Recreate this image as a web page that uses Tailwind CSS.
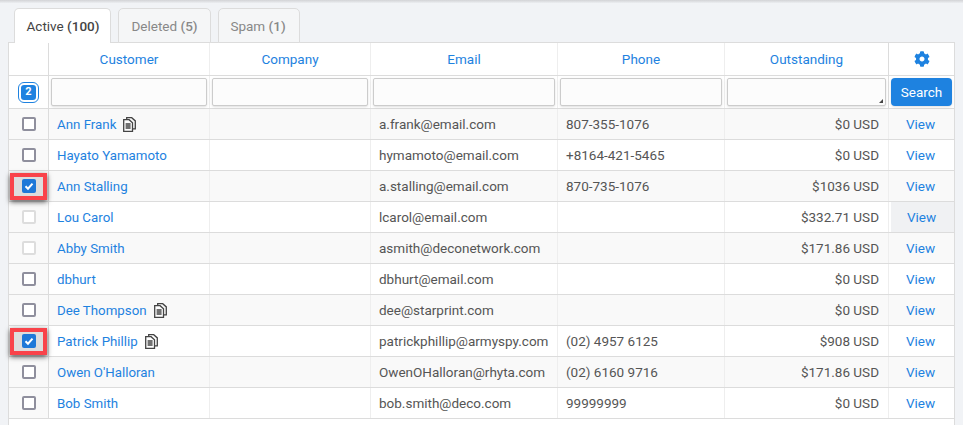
<!DOCTYPE html>
<html lang="en">
<head>
  <meta charset="UTF-8" />
  <title>Customers</title>
  <script src="https://cdn.jsdelivr.net/npm/@tailwindcss/browser@4"></script>
</head>
<body class="h-[425px] w-[963px] overflow-hidden bg-[#f1f3f6] font-['Roboto',sans-serif] text-[13.5px] text-[#555]">
  <div class="h-[3px] bg-gradient-to-b from-[#d2d3d6] to-[#eceef1]"></div>

  <!-- Tabs -->
  <div class="relative z-10 mt-[5px] flex h-[35px] gap-[7px] pl-[14px] -mb-px">
    <div class="flex w-[97px] items-center justify-center rounded-t-[5px] border border-b-0 border-[#dcdcdc] bg-white pt-px pl-px text-[#444]">Active&nbsp;<b class="font-medium">(100)</b></div>
    <div class="flex w-[93px] items-center justify-center rounded-t-[5px] border border-[#dcdcdc] bg-[#f5f6f7] pt-px text-[#888]">Deleted&nbsp;<b class="font-medium">(5)</b></div>
    <div class="flex w-[82px] items-center justify-center rounded-t-[5px] border border-[#dcdcdc] bg-[#f5f6f7] pt-px pr-[2px] text-[#888]">Spam&nbsp;<b class="font-medium">(1)</b></div>
  </div>

  <!-- Table -->
  <div class="ml-2 h-[400px] w-[947px] border-x border-t border-[#dcdcdc] bg-white">
    <div class="grid h-[33px] grid-cols-[40px_161px_161px_187px_167px_164px_65px] items-center border-b border-[#dcdcdc] text-center text-[#1e82e0]">
      <div class="h-full border-r border-[#dcdcdc]"></div>
      <div class="flex h-full items-center justify-center border-r border-[#eee]">Customer</div>
      <div class="flex h-full items-center justify-center border-r border-[#eee]">Company</div>
      <div class="flex h-full items-center justify-center border-r border-[#eee]">Email</div>
      <div class="flex h-full items-center justify-center border-r border-[#eee]">Phone</div>
      <div class="flex h-full items-center justify-center border-r border-[#dcdcdc]">Outstanding</div>
      <div class="flex h-full items-center justify-center">
        <svg viewBox="0 0 512 512" class="h-[16px] w-[16px] fill-[#1e82e0]"><path d="M487.4 315.7l-42.6-24.6c4.3-23.2 4.3-47 0-70.2l42.6-24.6c4.9-2.8 7.1-8.6 5.5-14-11.1-35.6-30-67.8-54.7-94.6-3.8-4.1-10-5.1-14.8-2.3L380.8 110c-17.9-15.4-38.5-27.3-60.8-35.1V25.8c0-5.6-3.9-10.5-9.4-11.7-36.7-8.2-74.3-7.8-109.2 0-5.5 1.2-9.4 6.1-9.4 11.7V75c-22.2 7.9-42.8 19.8-60.8 35.1L88.7 85.5c-4.9-2.8-11-1.9-14.8 2.3-24.7 26.7-43.6 58.9-54.7 94.6-1.7 5.4.6 11.2 5.5 14L67.3 221c-4.3 23.2-4.3 47 0 70.2l-42.6 24.6c-4.9 2.8-7.1 8.6-5.5 14 11.1 35.6 30 67.8 54.7 94.6 3.8 4.1 10 5.1 14.8 2.3l42.6-24.6c17.9 15.4 38.5 27.3 60.8 35.1v49.2c0 5.6 3.9 10.5 9.4 11.7 36.7 8.2 74.3 7.8 109.2 0 5.5-1.2 9.4-6.1 9.4-11.7v-49.2c22.2-7.9 42.8-19.8 60.8-35.1l42.6 24.6c4.9 2.8 11 1.9 14.8-2.3 24.7-26.7 43.6-58.9 54.7-94.6 1.5-5.5-.7-11.3-5.6-14.1zM256 336c-44.1 0-80-35.9-80-80s35.9-80 80-80 80 35.9 80 80-35.9 80-80 80z"/></svg>
      </div>
    </div>

    <!-- Filter row -->
    <div class="grid h-[33px] grid-cols-[40px_161px_161px_187px_167px_164px_65px] items-center border-b border-[#dcdcdc]">
      <div class="flex h-full items-center justify-center border-r border-[#dcdcdc]">
        <span class="flex h-[19px] w-[19px] items-center justify-center rounded-[5px] border-2 border-white bg-[#1e82e0] text-[11px] font-bold text-white outline outline-1 outline-[#1e82e0]">2</span>
      </div>
      <div class="flex h-full items-center border-r border-[#eee] px-[2px]"><div class="h-[28px] w-full rounded-[2px] border border-[#ccc] bg-[#fcfcfc] shadow-sm"></div></div>
      <div class="flex h-full items-center border-r border-[#eee] px-[2px]"><div class="h-[28px] w-full rounded-[2px] border border-[#ccc] bg-[#fcfcfc] shadow-sm"></div></div>
      <div class="flex h-full items-center border-r border-[#eee] px-[2px]"><div class="h-[28px] w-full rounded-[2px] border border-[#ccc] bg-[#fcfcfc] shadow-sm"></div></div>
      <div class="flex h-full items-center border-r border-[#eee] px-[2px]"><div class="h-[28px] w-full rounded-[2px] border border-[#ccc] bg-[#fcfcfc] shadow-sm"></div></div>
      <div class="flex h-full items-center border-r border-[#dcdcdc] px-[2px]">
        <div class="relative h-[28px] w-full rounded-[2px] border border-[#ccc] bg-[#fcfcfc] shadow-sm">
          <svg viewBox="0 0 4 4" class="absolute bottom-[2px] right-[2px] h-[4px] w-[4px] fill-[#444]"><path d="M4 0v4H0z"/></svg>
        </div>
      </div>
      <div class="flex h-full items-center justify-center">
        <div class="flex h-[28px] w-[61px] items-center justify-center rounded-[4px] bg-[#1e82e0] text-white shadow-sm">Search</div>
      </div>
    </div>

    <div id="rows"></div>
  </div>

  <script>
    const rows = [
      { name: "Ann Frank", copy: true, email: "a.frank@email.com", phone: "807-355-1076", due: "$0 USD" },
      { name: "Hayato Yamamoto", email: "hymamoto@email.com", phone: "+8164-421-5465", due: "$0 USD" },
      { name: "Ann Stalling", checked: true, email: "a.stalling@email.com", phone: "870-735-1076", due: "$1036 USD" },
      { name: "Lou Carol", faded: true, hover: true, email: "lcarol@email.com", phone: "", due: "$332.71 USD" },
      { name: "Abby Smith", faded: true, email: "asmith@deconetwork.com", phone: "", due: "$171.86 USD" },
      { name: "dbhurt", email: "dbhurt@email.com", phone: "", due: "$0 USD" },
      { name: "Dee Thompson", copy: true, email: "dee@starprint.com", phone: "", due: "$0 USD" },
      { name: "Patrick Phillip", copy: true, checked: true, email: "patrickphillip@armyspy.com", phone: "(02) 4957 6125", due: "$908 USD" },
      { name: "Owen O'Halloran", email: "OwenOHalloran@rhyta.com", phone: "(02) 6160 9716", due: "$171.86 USD" },
      { name: "Bob Smith", email: "bob.smith@deco.com", phone: "99999999", due: "$0 USD" }
    ];

    const copyIcon = `<svg viewBox="0 0 13 15" class="ml-[7px] h-[15px] w-[13px] fill-none stroke-[#444] stroke-[1.3]"><path d="M3.7 2.5V.7h5l3.6 3.2v8H9.6"/><path d="M.7 2.7h5.4l3.4 3.2v8.4H.7z" class="fill-white"/><path d="M2.6 7h5M2.6 9h5M2.6 11h5"/></svg>`;

    function checkbox(r) {
      if (r.checked) {
        return `<div class="relative flex h-[27px] w-[37px] shrink-0 items-center justify-center border-4 border-[#f9434a] bg-[#ddd] shadow-[0_2px_5px_rgba(0,0,0,0.65)]">
          <span class="flex h-[14px] w-[14px] items-center justify-center rounded-[2px] bg-[#1e78d8]">
            <svg viewBox="0 0 12 12" class="h-[12px] w-[12px] fill-none stroke-white stroke-[2]"><path d="M2.5 6.2l2.5 2.5 4.5-5"/></svg>
          </span>
        </div>`;
      }
      const c = r.faded ? "border-[#ddd]" : "border-[#8f8f9d]";
      return `<span class="h-[14px] w-[14px] rounded-[2px] border-2 bg-white ${c}"></span>`;
    }

    document.getElementById("rows").innerHTML = rows.map((r, i) => `
      <div class="grid h-[31px] grid-cols-[40px_161px_161px_187px_167px_164px_65px] items-center border-b border-[#dcdcdc] ${i % 2 == 0 ? "bg-[#f9f9f9]" : "bg-white"}">
        <div class="flex h-full items-center justify-center border-r border-[#dcdcdc] bg-[#f9f9f9]">${checkbox(r)}</div>
        <div class="flex h-full items-center border-r border-[#eee] pl-2 pt-px text-[13.3px] text-[#1e82e0]">${r.name}${r.copy ? copyIcon : ""}</div>
        <div class="h-full border-r border-[#eee]"></div>
        <div class="flex h-full items-center border-r border-[#eee] pl-2 pt-px">${r.email}</div>
        <div class="flex h-full items-center border-r border-[#eee] pl-2 pt-px">${r.phone}</div>
        <div class="flex h-full items-center justify-end border-r border-[#eee] pr-[9px] pt-px">${r.due}</div>
        <div class="flex h-full items-center justify-center pt-px pr-[2px] text-[#1e82e0] ${r.hover ? "ml-[2px] bg-[#f0f1f3]" : ""}">View</div>
      </div>`).join("");
  </script>
</body>
</html>
